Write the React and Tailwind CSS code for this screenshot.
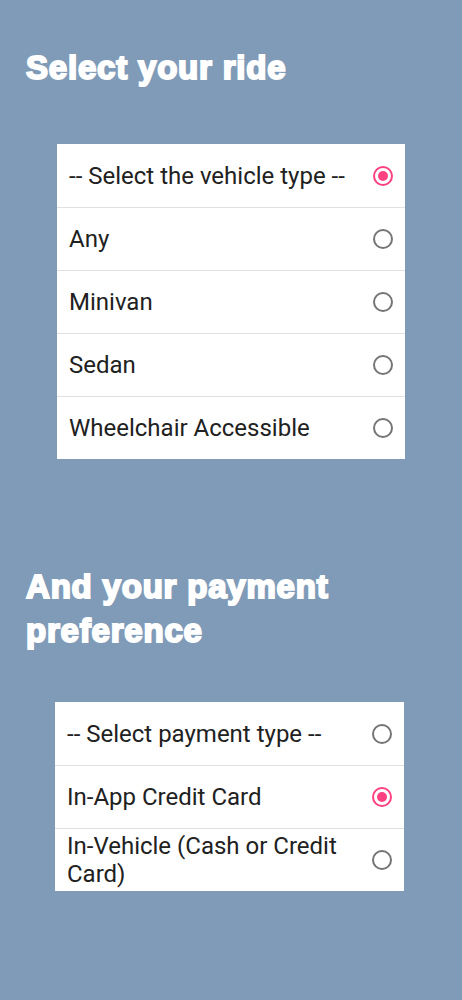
import React, { useState } from 'react';

const vehicleTypes = ['-- Select the vehicle type --', 'Any', 'Minivan', 'Sedan', 'Wheelchair Accessible'];
const paymentTypes = ['-- Select payment type --', 'In-App Credit Card', 'In-Vehicle (Cash or Credit Card)'];

function Radio({ checked }) {
  return (
    <span
      className={`flex h-[20px] w-[20px] shrink-0 items-center justify-center rounded-full border-2 ${
        checked ? 'border-[#ff4081]' : 'border-[#757575]'
      }`}
    >
      {checked && <span className="h-[10px] w-[10px] rounded-full bg-[#ff4081]" />}
    </span>
  );
}

function OptionList({ options, selected, onSelect, className }) {
  return (
    <div className={`bg-white ${className}`}>
      {options.map((label, i) => (
        <button
          key={label}
          type="button"
          onClick={() => onSelect(i)}
          className={`flex h-[63px] w-full items-center gap-3 pl-3 pr-[12px] text-left ${
            i > 0 ? 'border-t border-[#e0e0e0]' : ''
          }`}
        >
          <span className="flex-1 text-[24px] leading-[28px] text-[#212121]">{label}</span>
          <Radio checked={selected === i} />
        </button>
      ))}
    </div>
  );
}

export default function App() {
  const [vehicle, setVehicle] = useState(0);
  const [payment, setPayment] = useState(1);

  return (
    <div className="min-h-screen w-full bg-[#7f9bb8] pt-[46px] font-['Roboto',sans-serif]">
      <h1 className="pl-[26px] font-['Liberation_Sans',sans-serif] text-[33px] font-bold leading-[44px] tracking-[0.8px] text-white [-webkit-text-stroke:2px_#fff]">
        Select your ride
      </h1>

      <OptionList
        options={vehicleTypes}
        selected={vehicle}
        onSelect={setVehicle}
        className="ml-[57px] mt-[54px] w-[348px]"
      />

      <h2 className="mt-[106px] pl-[26px] font-['Liberation_Sans',sans-serif] text-[33px] font-bold leading-[44px] tracking-[0.8px] text-white [-webkit-text-stroke:2px_#fff]">
        And your payment
        <br />
        preference
      </h2>

      <OptionList
        options={paymentTypes}
        selected={payment}
        onSelect={setPayment}
        className="ml-[55px] mt-[49px] w-[349px]"
      />
    </div>
  );
}
